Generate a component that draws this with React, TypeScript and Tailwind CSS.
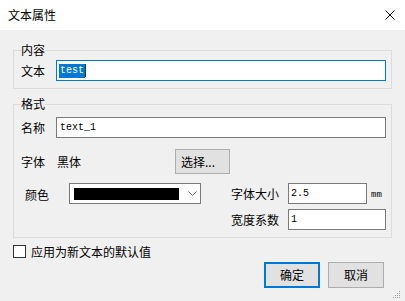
import React from "react";

const cjk = { fontFamily: '"Noto Sans CJK SC", "Noto Sans", sans-serif' };
const mono = { fontFamily: '"Liberation Mono", "DejaVu Sans Mono", monospace' };

export default function App() {
  return (
    <div
      className="relative w-[405px] h-[301px] bg-[#f0f0f0] flex flex-col text-[12px] leading-[12px] text-black overflow-hidden"
      style={cjk}
    >
      {/* Title bar */}
      <div className="h-[30px] bg-white flex items-center justify-between pl-[8px] pr-[10px] shrink-0">
        <span className="text-[12px] leading-[12px]">文本属性</span>
        <svg width="10" height="10" viewBox="0 0 10 10" className="mt-[-1px]">
          <path d="M0.5 0.5 L9.5 9.5 M9.5 0.5 L0.5 9.5" stroke="#000" strokeWidth="1" fill="none" />
        </svg>
      </div>

      <div className="flex flex-col px-[13px] pt-[14px]">
        {/* 内容 group */}
        <fieldset className="border border-[#dcdcdc] pl-[7px] pr-[5px] pt-[4px] pb-[7px] m-0 min-w-0">
          <legend className="p-0 text-[12px] leading-[12px]">内容</legend>
          <div className="flex items-center h-[21px]">
            <span className="w-[35px]">文本</span>
            <div className="w-[330px] h-[21px] border border-[#0078d7] bg-white flex items-center pl-[2px]">
              <span className="bg-[#0078d7] text-white text-[10px] leading-[14px] px-[1px]" style={mono}>
                test
              </span>
              <span className="w-[1px] h-[13px] bg-[#333]" />
            </div>
          </div>
        </fieldset>

        {/* 格式 group */}
        <fieldset className="border border-[#dcdcdc] pl-[7px] pr-[5px] pt-[7px] pb-[7px] m-0 mt-[9px] min-w-0">
          <legend className="p-0 text-[12px] leading-[12px]">格式</legend>
          <div className="flex items-center h-[21px]">
            <span className="w-[35px]">名称</span>
            <div className="w-[330px] h-[21px] border border-[#7a7a7a] bg-white flex items-center pl-[3px]">
              <span className="text-[10px] leading-[14px]" style={mono}>
                text_1
              </span>
            </div>
          </div>

          <div className="flex items-center h-[25px] mt-[11px]">
            <span className="w-[36px]">字体</span>
            <span className="w-[118px]">黑体</span>
            <div className="w-[55px] h-[25px] bg-[#e1e1e1] border border-[#adadad] flex items-center pl-[5px]">
              <span>选择...</span>
            </div>
          </div>

          <div className="flex items-center h-[21px] mt-[9px]">
            <span className="w-[48px] pl-[4px] pt-[2px]">颜色</span>
            <div className="w-[132px] h-[21px] border border-[#7a7a7a] bg-white flex items-center pl-[4px]">
              <div className="w-[105px] h-[12px] bg-black" />
              <svg width="9" height="5" viewBox="0 0 9 5" className="ml-[9px]">
                <path d="M0.5 0.5 L4.5 4.5 L8.5 0.5" stroke="#6b6b6b" strokeWidth="1" fill="none" />
              </svg>
            </div>
            <span className="w-[57px] ml-[30px]">字体大小</span>
            <div className="w-[79px] h-[21px] border border-[#7a7a7a] bg-white flex items-center pl-[2px]">
              <span className="text-[10px] leading-[14px]" style={mono}>
                2.5
              </span>
            </div>
            <span className="ml-[4px] mt-[4px] text-[9px] leading-[9px]" style={mono}>
              mm
            </span>
          </div>

          <div className="flex items-center h-[21px] mt-[5px]">
            <span className="w-[57px] ml-[210px]">宽度系数</span>
            <div className="w-[98px] h-[21px] border border-[#7a7a7a] bg-white flex items-center pl-[2px]">
              <span className="text-[10px] leading-[14px]" style={mono}>
                1
              </span>
            </div>
          </div>
        </fieldset>

        {/* checkbox */}
        <div className="flex items-center h-[13px] mt-[7px]">
          <div className="w-[13px] h-[13px] border border-[#333] bg-white" />
          <span className="ml-[5px]">应用为新文本的默认值</span>
        </div>

        {/* buttons */}
        <div className="flex justify-end gap-[8px] pr-[8px] mt-[4px]">
          <div className="w-[56px] h-[26px] border-2 border-[#0078d7] bg-[#e1e1e1] flex items-center justify-center">
            确定
          </div>
          <div className="w-[56px] h-[26px] border border-[#adadad] bg-[#e1e1e1] flex items-center justify-center">
            取消
          </div>
        </div>
      </div>

      {/* size grip */}
      <svg width="10" height="10" viewBox="0 0 10 10" className="absolute right-[3px] bottom-[1px]">
        <rect x="7" y="1" width="1" height="1" fill="#a0a0a0" />
        <rect x="5" y="3" width="1" height="1" fill="#a0a0a0" />
        <rect x="7" y="3" width="1" height="1" fill="#a0a0a0" />
        <rect x="3" y="5" width="1" height="1" fill="#a0a0a0" />
        <rect x="5" y="5" width="1" height="1" fill="#a0a0a0" />
        <rect x="7" y="5" width="1" height="1" fill="#a0a0a0" />
        <rect x="1" y="7" width="1" height="1" fill="#a0a0a0" />
        <rect x="3" y="7" width="1" height="1" fill="#a0a0a0" />
        <rect x="5" y="7" width="1" height="1" fill="#a0a0a0" />
        <rect x="7" y="7" width="1" height="1" fill="#a0a0a0" />
      </svg>
    </div>
  );
}
